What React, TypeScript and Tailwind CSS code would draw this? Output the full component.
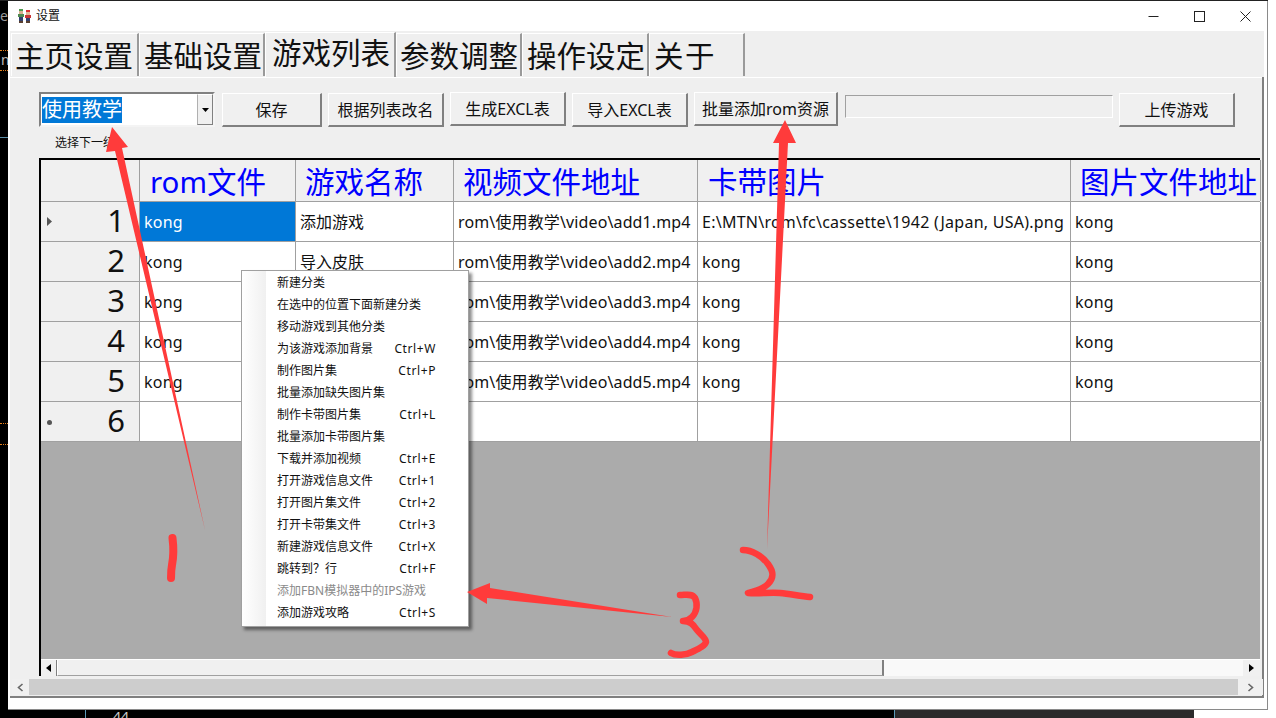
import React from "react";

const font = { fontFamily: '"Noto Sans", "Noto Sans CJK SC", sans-serif' };

const tabs = [
  { t: "主页设置", w: "w-[128px]", cls: "h-[43px] pl-[3px] mb-px pt-[1px]" },
  { t: "基础设置", w: "w-[126px]", cls: "h-[43px] pl-[4px] mb-px pt-[1px]" },
  { t: "游戏列表", w: "w-[131px]", cls: "h-[45px] pl-[6px] border-r-0 pb-[4px]" },
  { t: "参数调整", w: "w-[126px]", cls: "h-[43px] pl-[3px] mb-px pt-[1px]" },
  { t: "操作设定", w: "w-[127px]", cls: "h-[43px] pl-[4px] mb-px pt-[1px]" },
  { t: "关于", w: "w-[96px]", cls: "h-[43px] pl-[4px] mb-px pt-[1px] tracking-[1.500px]" },
];

const cols = ["w-[156px]", "w-[158px]", "w-[244px]", "w-[373px]", "w-[190px]"];
const headers = [
  { t: "rom文件", pl: "pl-[10px]" },
  { t: "游戏名称", pl: "pl-[9px]" },
  { t: "视频文件地址", pl: "pl-[9px]" },
  { t: "卡带图片", pl: "pl-[10px]" },
  { t: "图片文件地址", pl: "pl-[9px]" },
];
const rows = [
  ["kong", "添加游戏", "rom\\使用教学\\video\\add1.mp4", "E:\\MTN\\rom\\fc\\cassette\\1942 (Japan, USA).png", "kong"],
  ["kong", "导入皮肤", "rom\\使用教学\\video\\add2.mp4", "kong", "kong"],
  ["kong", "", "rom\\使用教学\\video\\add3.mp4", "kong", "kong"],
  ["kong", "", "rom\\使用教学\\video\\add4.mp4", "kong", "kong"],
  ["kong", "", "rom\\使用教学\\video\\add5.mp4", "kong", "kong"],
  ["", "", "", "", ""],
];

const menu: [string, string, boolean?][] = [
  ["新建分类", ""],
  ["在选中的位置下面新建分类", ""],
  ["移动游戏到其他分类", ""],
  ["为该游戏添加背景", "Ctrl+W"],
  ["制作图片集", "Ctrl+P"],
  ["批量添加缺失图片集", ""],
  ["制作卡带图片集", "Ctrl+L"],
  ["批量添加卡带图片集", ""],
  ["下载并添加视频", "Ctrl+E"],
  ["打开游戏信息文件", "Ctrl+1"],
  ["打开图片集文件", "Ctrl+2"],
  ["打开卡带集文件", "Ctrl+3"],
  ["新建游戏信息文件", "Ctrl+X"],
  ["跳转到？行", "Ctrl+F"],
  ["添加FBN模拟器中的IPS游戏", "", true],
  ["添加游戏攻略", "Ctrl+S"],
];

function Btn({ label, w, mt, ml }: { label: string; w: string; mt: string; ml: string }) {
  return (
    <div
      className={`${w} ${mt} ${ml} h-[34px] shrink-0 flex items-center justify-center bg-[#f0f0f0] border border-t-white border-l-white border-r-[#808080] border-b-[#808080] border-b-2 border-r-2 text-[16px] text-[#111] whitespace-nowrap`}
    >
      {label}
    </div>
  );
}

function Game() {
  return (
    <svg width="13" height="14" viewBox="0 0 13 14" className="shrink-0">
      <rect x="1" y="0" width="4" height="2" fill="#4f9a4f" />
      <rect x="1" y="2" width="4" height="3" fill="#d8b090" />
      <rect x="0" y="5" width="6" height="3" fill="#4f8a50" />
      <rect x="1" y="8" width="4" height="4" fill="#33406e" />
      <rect x="1" y="12" width="4" height="2" fill="#5a4030" />
      <rect x="8" y="1" width="4" height="2" fill="#d83030" />
      <rect x="8" y="3" width="4" height="3" fill="#e0b898" />
      <rect x="7" y="6" width="6" height="3" fill="#c83434" />
      <rect x="8" y="9" width="4" height="3" fill="#33406e" />
      <rect x="8" y="12" width="4" height="2" fill="#5a4030" />
    </svg>
  );
}

function Annotations() {
  const red = "#ff3b3b";
  return (
    <svg className="absolute inset-0 pointer-events-none" width="1276" height="718" viewBox="0 0 1276 718">
      <polygon fill={red} points="112,127 128,147 122,148 205,530 115,151 106,152" />
      <polygon fill={red} points="785,120 796,143 788,143 767,549 779,143 773,143" />
      <polygon fill={red} points="467,592 490,583 490,588 672,617 487,598 487,604" />
      <g fill="none" stroke={red} strokeLinecap="round" strokeLinejoin="round">
        <path d="M172.500 538 C174 550 173 560 172 565 C171 570 171 574 171 578" strokeWidth="8" />
        <path d="M743 550 C752 550 762 556 768 564 C774 572 774 578 768 584 C762 590 754 591 748 593 C760 594 770 592 780 593 C790 594 800 596 810 597" strokeWidth="6.500" />
        <path d="M680 595 C686 595 692 593 695 598 C698 604 697 612 692 617 C689 620 686 621 683 621 C690 621 693 624 697 630 C701 635 706 638 706 642 C705 646 698 649 692 652 C686 655 676 656 671 653" strokeWidth="6.500" />
      </g>
    </svg>
  );
}

export default function App() {
  return (
    <div className="relative w-[1276px] h-[718px] overflow-hidden bg-white flex flex-col" style={font}>
      <div className="h-px bg-[#222] w-[1268px]" />
      <div className="flex h-[709px]">
        {/* desktop strip left */}
        <div className="w-2 bg-black shrink-0 overflow-hidden relative text-[#999] text-[14px] leading-none">
          <span className="absolute right-0 top-[8px]">ce</span>
          <span className="absolute left-[1px] top-[52px] text-[#bbb]">n</span>
          <div className="absolute left-0 top-[49px] w-2 border-t border-dotted border-[#e8801c]" />
          <div className="absolute left-0 top-[69px] w-2 border-t border-dotted border-[#e8801c]" />
          <div className="absolute left-0 top-[136px] w-2 border-t border-[#5b8ea8]" />
          <div className="absolute left-0 top-[422px] w-2 border-t border-dotted border-[#e8801c]" />
          <div className="absolute left-0 top-[443px] w-2 border-t border-dotted border-[#e8801c]" />
        </div>

        {/* window */}
        <div className="w-[1260px] shrink-0 flex flex-col bg-white border-r border-b border-[#8a8a8a]">
          <div className="h-[30px] shrink-0 flex items-center pl-[10px] gap-[5px]">
            <Game />
            <span className="text-[12px] text-[#111]">设置</span>
            <div className="ml-auto flex items-center text-[#222] -mr-px">
              <div className="w-[46px] flex justify-center">
                <svg width="11" height="11" viewBox="0 0 11 11"><path d="M0.500 5.500H10.500" stroke="#222" /></svg>
              </div>
              <div className="w-[46px] flex justify-center">
                <svg width="11" height="11" viewBox="0 0 11 11"><rect x="0.500" y="0.500" width="10" height="10" fill="none" stroke="#222" /></svg>
              </div>
              <div className="w-[46px] flex justify-center">
                <svg width="11" height="11" viewBox="0 0 11 11"><path d="M0.500 0.500L10.500 10.500M10.500 0.500L0.500 10.500" stroke="#222" /></svg>
              </div>
            </div>
          </div>

          {/* tab control */}
          <div className="flex flex-col ml-[2px] w-[1254px] h-[667px] bg-[#efefef] border-r-2 border-b-2 border-[#808080]">
            <div className="h-[46px] shrink-0 flex items-end pl-px border-r-2 border-[#efefef] -mr-[2px] relative z-10 bg-[#efefef]">
              {tabs.map((t) => (
                <div
                  key={t.t}
                  className={`${t.w} ${t.cls} shrink-0 flex items-center border-l border-t border-white border-r-2 border-r-[#9a9a9a] text-[29.500px] leading-none text-[#111] whitespace-nowrap`}
                >
                  {t.t}
                </div>
              ))}
            </div>
            <div className="border-t border-white flex-1 flex flex-col pl-[29px] min-h-0">
              {/* toolbar */}
              <div className="h-[50px] shrink-0 flex items-start pt-[14px]">
                <div className="w-[176px] h-[35px] shrink-0 bg-white border-2 border-t-[#808080] border-l-[#808080] border-r-[#f4f4f4] border-b-[#f4f4f4] flex items-center pl-px relative">
                  <span className="bg-[#0078d7] text-white text-[20px] leading-[26px] h-[26px] whitespace-nowrap">使用教学</span>
                  <div className="absolute right-0 top-0 w-[16px] h-[31px] bg-[#f0f0f0] border border-t-white border-l-[#b0b0b0] border-r-[#808080] border-b-[#808080] flex items-center justify-center">
                    <svg width="7" height="4" viewBox="0 0 7 4"><path d="M0 0H7L3.500 4Z" fill="#000" /></svg>
                  </div>
                </div>
                <Btn label="保存" w="w-[100px]" mt="mt-px" ml="ml-[7px]" />
                <Btn label="根据列表改名" w="w-[116px]" mt="mt-px" ml="ml-[6px]" />
                <Btn label="生成EXCL表" w="w-[116px]" mt="mt-0" ml="ml-[6px]" />
                <Btn label="导入EXCL表" w="w-[116px]" mt="mt-px" ml="ml-[6px]" />
                <Btn label="批量添加rom资源" w="w-[144px]" mt="mt-0" ml="ml-[6px]" />
                <div className="w-[268px] h-[23px] mt-[3px] ml-[7px] shrink-0 border border-t-[#a0a0a0] border-l-[#a0a0a0] border-r-white border-b-white bg-[#efefef]" />
                <Btn label="上传游戏" w="w-[116px]" mt="mt-px" ml="ml-[6px]" />
              </div>
              <div className="h-[30px] shrink-0 pl-[16px] text-[12px] text-[#111] leading-[30px]">选择下一级</div>

              {/* data grid */}
              <div className="w-[1221px] h-[518px] shrink-0 flex flex-col border-t-2 border-l-2 border-[#000] bg-[#ababab]">
                <div className="flex h-[42px] shrink-0 bg-[#f0f0f0] border-b border-[#a0a0a0]">
                  <div className="w-[99px] shrink-0 border-r border-[#a0a0a0]" />
                  {headers.map((h, i) => (
                    <div
                      key={h.t}
                      className={`${cols[i]} ${h.pl} shrink-0 border-r border-[#a0a0a0] text-[29.500px] leading-[44px] text-[#0000ff] whitespace-nowrap overflow-hidden`}
                    >
                      {h.t}
                    </div>
                  ))}
                </div>
                {rows.map((r, i) => (
                  <div key={i} className="flex h-[40px] shrink-0 bg-white border-b border-[#a0a0a0]">
                    <div className="w-[99px] shrink-0 bg-[#f0f0f0] border-r border-[#a0a0a0] flex items-center pr-[14px] pl-[5px]">
                      <div className="w-[6px] flex justify-center">
                        {i === 0 && (
                          <svg width="5" height="9" viewBox="0 0 5 9"><path d="M0 0L5 4.500L0 9Z" fill="#555" /></svg>
                        )}
                        {i === 5 && <span className="w-[5px] h-[5px] rounded-full bg-[#555] mt-[2px]" />}
                      </div>
                      <span className="ml-auto text-[31px] leading-none text-[#111] -mt-[2px]">{i + 1}</span>
                    </div>
                    {r.map((c, j) => (
                      <div
                        key={j}
                        className={`${cols[j]} shrink-0 pl-[4px] border-r border-[#a0a0a0] text-[16px] leading-[41px] whitespace-nowrap overflow-hidden ${
                          j === 1 ? "" : j === 2 ? "tracking-[0.13px]" : "tracking-[0.25px]"
                        } ${i === 0 && j === 0 ? "bg-[#0078d7] text-white" : "text-[#111]"}`}
                      >
                        {c}
                      </div>
                    ))}
                  </div>
                ))}
                <div className="flex-1" />
                <div className="h-[17px] shrink-0 flex bg-[#f9f9f9] border-t border-white">
                  <div className="w-[16px] shrink-0 bg-[#f0f0f0] border-r border-[#808080] flex items-center justify-center">
                    <svg width="5" height="8" viewBox="0 0 5 8"><path d="M5 0L0 4L5 8Z" fill="#000" /></svg>
                  </div>
                  <div className="w-[827px] shrink-0 bg-[#f0f0f0] border-r-2 border-b border-l border-l-white border-r-[#808080] border-b-[#a0a0a0]" />
                  <div className="flex-1" />
                  <div className="w-[17px] shrink-0 bg-[#f0f0f0] flex items-center justify-center">
                    <svg width="5" height="8" viewBox="0 0 5 8"><path d="M0 0L5 4L0 8Z" fill="#000" /></svg>
                  </div>
                </div>
              </div>
              {/* outer scrollbar */}
              <div className="mt-[3px] -ml-[27px] w-[1251px] h-[16px] shrink-0 flex bg-[#f0f0f0]">
                <div className="w-[17px] shrink-0 flex items-center justify-center">
                  <svg width="7" height="9" viewBox="0 0 7 9"><path d="M5.500 1L1.500 4.500L5.500 8" fill="none" stroke="#666" strokeWidth="1.600" /></svg>
                </div>
                <div className="w-[1209px] shrink-0 bg-[#cdcdcd]" />
                <div className="flex-1 flex items-center justify-center">
                  <svg width="7" height="9" viewBox="0 0 7 9"><path d="M1.500 1L5.500 4.500L1.500 8" fill="none" stroke="#666" strokeWidth="1.600" /></svg>
                </div>
              </div>
            </div>
          </div>
        </div>
        <div className="flex-1 bg-white" />
      </div>

      {/* desktop strip bottom */}
      <div className="h-2 flex bg-black relative overflow-hidden">
        <div className="w-[85px] shrink-0" />
        <div className="w-px h-2 bg-[#5b9ab8] shrink-0" />
        <span className="ml-[27px] text-[14px] leading-[14px] text-[#ccc]">44</span>
        <div className="ml-auto w-[300px] bg-[#2b2a2b] mr-[82px] border-l border-[#5b9ab8]" />
        <div className="absolute right-0 top-0 w-[82px] h-2 bg-white" />
      </div>

      {/* context menu */}
      <div className="absolute left-[241px] top-[270px] w-[228px] h-[357px] bg-white border border-[#a0a0a0] shadow-[3px_3px_3px_rgba(0,0,0,0.45)] flex">
        <div className="w-[24px] shrink-0 bg-gradient-to-r from-white to-[#f0f0f0]" />
        <div className="flex-1 pt-px">
          {menu.map(([t, k, dis]) => (
            <div
              key={t}
              className={`h-[22px] flex items-center pl-[11px] pr-[32px] text-[12px] whitespace-nowrap ${
                dis ? "text-[#8a8a8a]" : "text-[#111]"
              }`}
            >
              <span>{t}</span>
              {k && <span className="ml-auto tracking-[0.6px]">{k}</span>}
            </div>
          ))}
        </div>
      </div>

      <Annotations />
    </div>
  );
}
